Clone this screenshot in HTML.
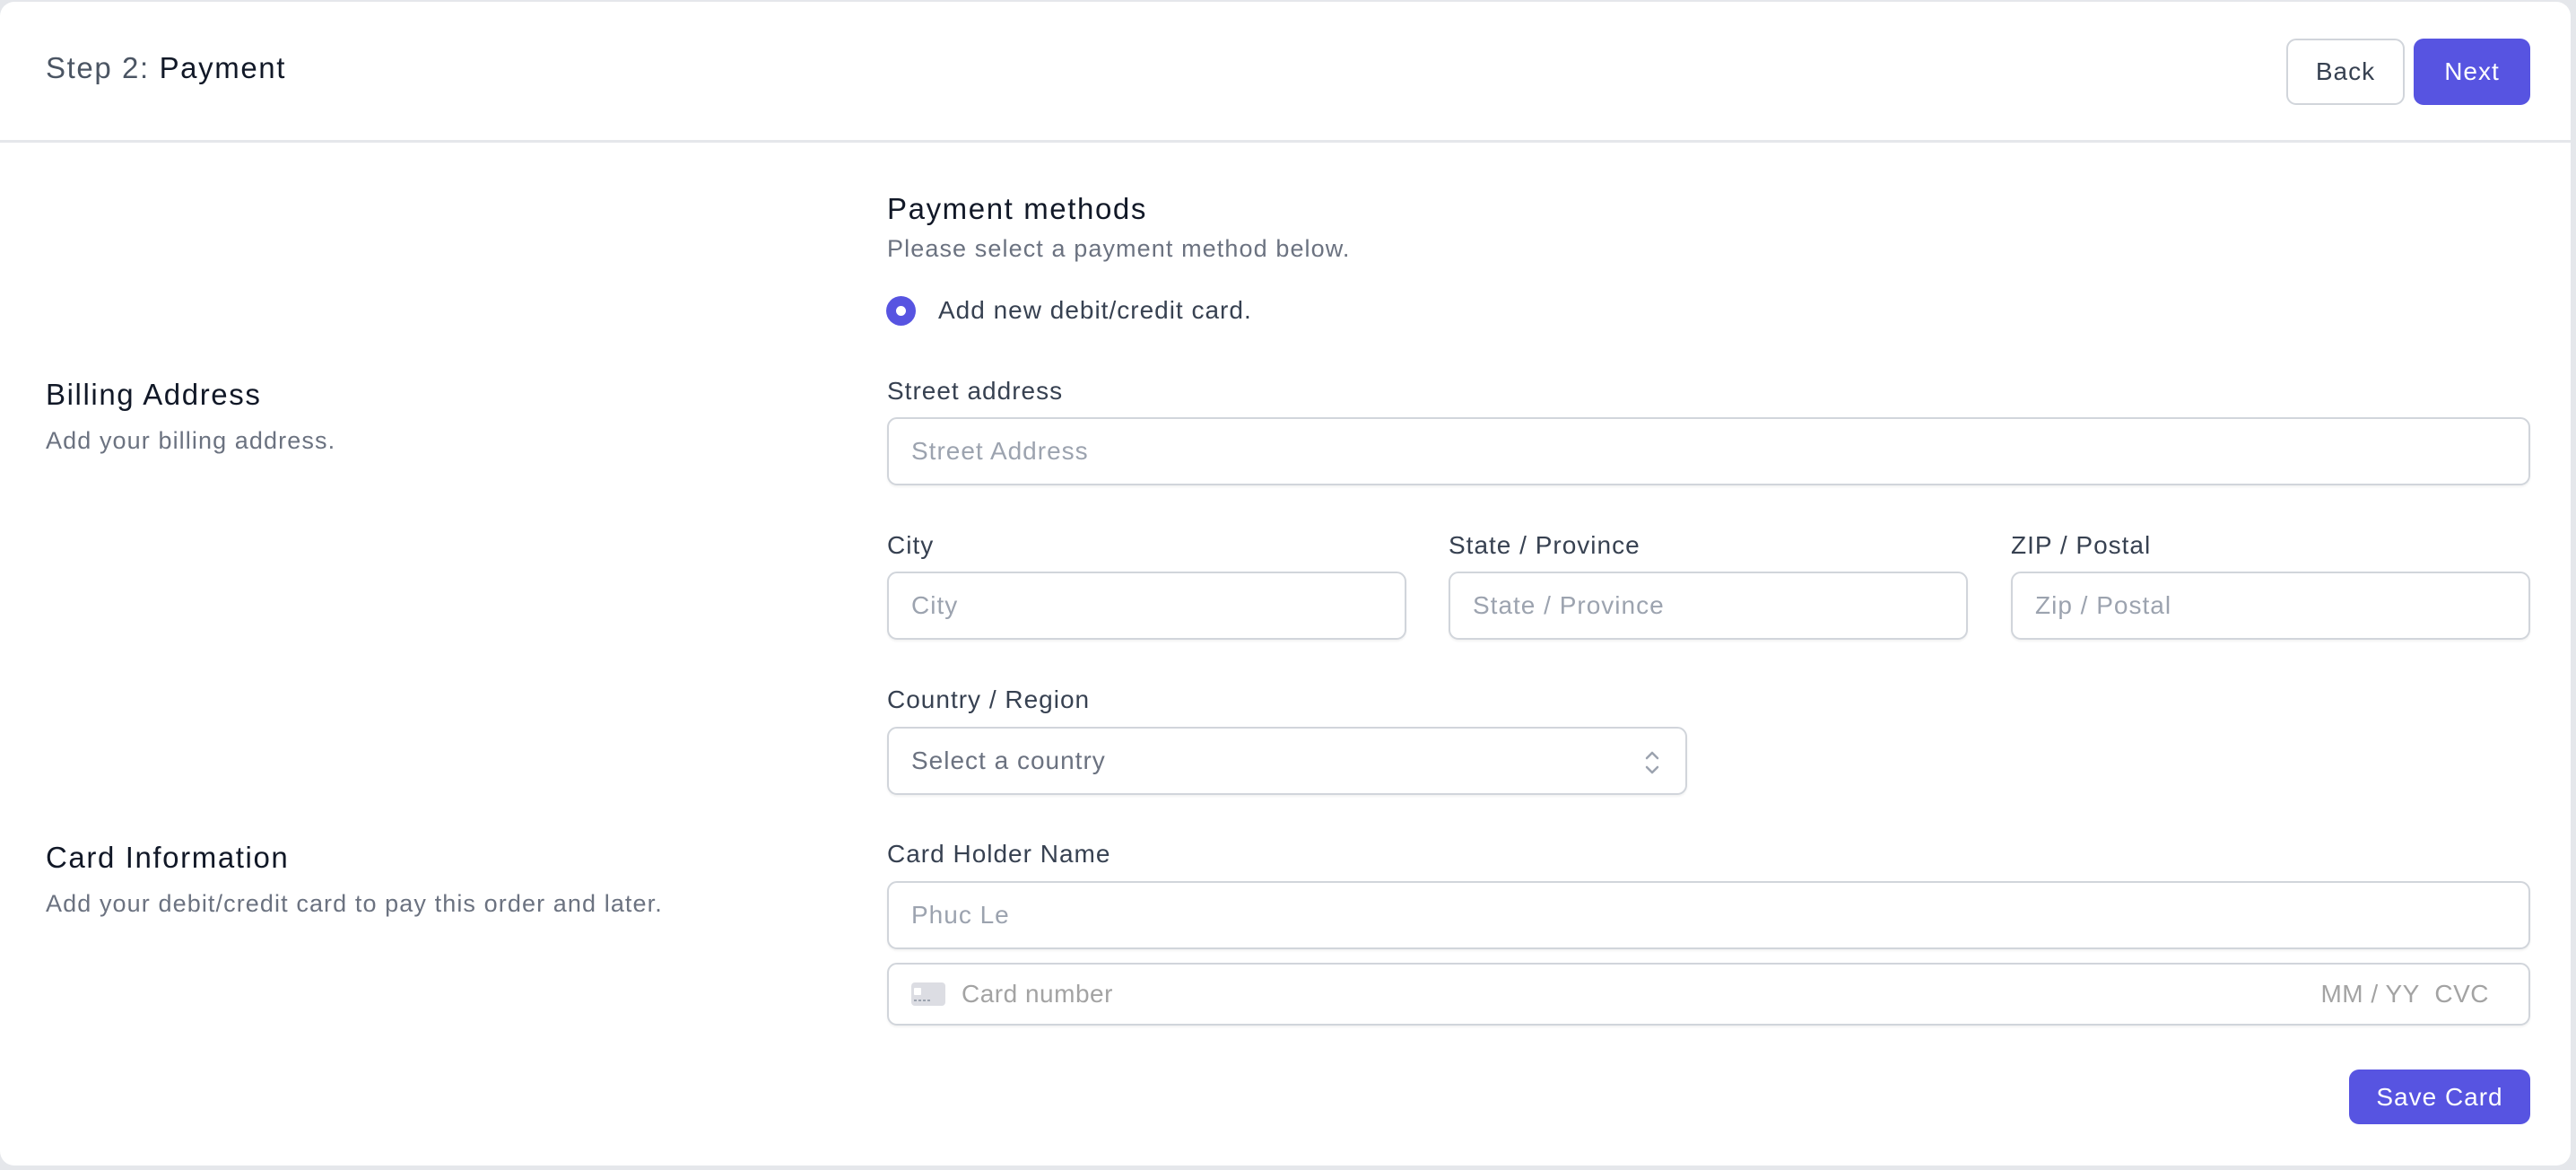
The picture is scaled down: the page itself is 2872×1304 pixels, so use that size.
<!DOCTYPE html>
<html><head><meta charset="utf-8"><style>
*{box-sizing:border-box;margin:0;padding:0}
html,body{width:2872px;height:1304px;overflow:hidden;background:#e5e7eb;font-family:"Liberation Sans",sans-serif;letter-spacing:1px}
.card{position:absolute;left:0;top:2px;width:2866px;height:1297px;background:#fff;border-radius:16px;}
.hdr{position:absolute;left:0;top:0;width:100%;height:157px;border-bottom:3px solid #e5e7eb}
.abs{position:absolute;white-space:nowrap}
.t{font-size:33px;line-height:40px;letter-spacing:1.6px}
.btn{position:absolute;border-radius:11px;font-size:28px;display:flex;align-items:center;justify-content:center}
.lbl{position:absolute;left:989px;font-size:28px;color:#374151;line-height:34px}
.inp{position:absolute;border:2px solid #d1d5db;border-radius:11px;background:#fff;box-shadow:0 2px 2px rgba(0,0,0,.05);font-size:28px;color:#9ca3af;display:flex;align-items:center;padding-left:25px}
.sub{font-size:27px;color:#6b7280;line-height:34px;letter-spacing:1.1px}
</style></head><body>
<div class="card">
 <div class="hdr"></div>
 <div class="abs t" style="left:51px;top:54px"><span style="color:#4b5563">Step 2:</span> <span style="color:#111827">Payment</span></div>
 <div class="btn" style="left:2549px;top:41px;width:132px;height:74px;border:2px solid #d1d5db;color:#374151">Back</div>
 <div class="btn" style="left:2691px;top:41px;width:130px;height:74px;background:#5754e1;color:#fff">Next</div>

 <div class="abs t" style="left:51px;top:418px;color:#111827">Billing Address</div>
 <div class="abs sub" style="left:51px;top:472px">Add your billing address.</div>
 <div class="abs t" style="left:51px;top:934px;color:#111827">Card Information</div>
 <div class="abs sub" style="left:51px;top:988px">Add your debit/credit card to pay this order and later.</div>

 <div class="abs t" style="left:989px;top:211px;color:#111827">Payment methods</div>
 <div class="abs sub" style="left:989px;top:258px">Please select a payment method below.</div>
 <div class="abs" style="left:988px;top:328px;width:33px;height:33px;border-radius:50%;background:#5754e1"><div style="position:absolute;left:11px;top:11px;width:11px;height:11px;border-radius:50%;background:#fff"></div></div>
 <div class="abs" style="left:1046px;top:327px;font-size:28px;color:#374151;line-height:34px">Add new debit/credit card.</div>

 <div class="lbl" style="top:417px">Street address</div>
 <div class="inp" style="left:989px;top:463px;width:1832px;height:76px">Street Address</div>

 <div class="lbl" style="top:589px">City</div>
 <div class="lbl" style="top:589px;left:1615px">State / Province</div>
 <div class="lbl" style="top:589px;left:2242px">ZIP / Postal</div>
 <div class="inp" style="left:989px;top:635px;width:579px;height:76px">City</div>
 <div class="inp" style="left:1615px;top:635px;width:579px;height:76px">State / Province</div>
 <div class="inp" style="left:2242px;top:635px;width:579px;height:76px">Zip / Postal</div>

 <div class="lbl" style="top:761px">Country / Region</div>
 <div class="inp" style="left:989px;top:808px;width:892px;height:76px;color:#6b7280">Select a country
  <svg style="position:absolute;left:840px;top:21px" width="22" height="34" viewBox="0 0 22 34"><path d="M5 12l6-6 6 6M5 22l6 6 6-6" fill="none" stroke="#9ca3af" stroke-width="2.5" stroke-linecap="round" stroke-linejoin="round"/></svg>
 </div>

 <div class="lbl" style="top:933px">Card Holder Name</div>
 <div class="inp" style="left:989px;top:980px;width:1832px;height:76px">Phuc Le</div>
 <div class="inp" style="left:989px;top:1071px;width:1832px;height:70px;color:#a3a3a3;letter-spacing:0.5px">
  <svg style="margin-right:18px" width="38" height="26" viewBox="0 0 38 26"><rect width="38" height="26" rx="4" fill="#dcdde3"/><rect x="3" y="6" width="8" height="8" rx="1" fill="#fff"/><path d="M3 20h3M8 20h3M13 20h3M18 20h3" stroke="#9ca3af" stroke-width="2"/></svg>Card number
  <span style="position:absolute;right:44px">MM / YY&nbsp; CVC</span>
 </div>

 <div class="btn" style="left:2619px;top:1190px;width:202px;height:61px;background:#5754e1;color:#fff">Save Card</div>
</div>
</body></html>
